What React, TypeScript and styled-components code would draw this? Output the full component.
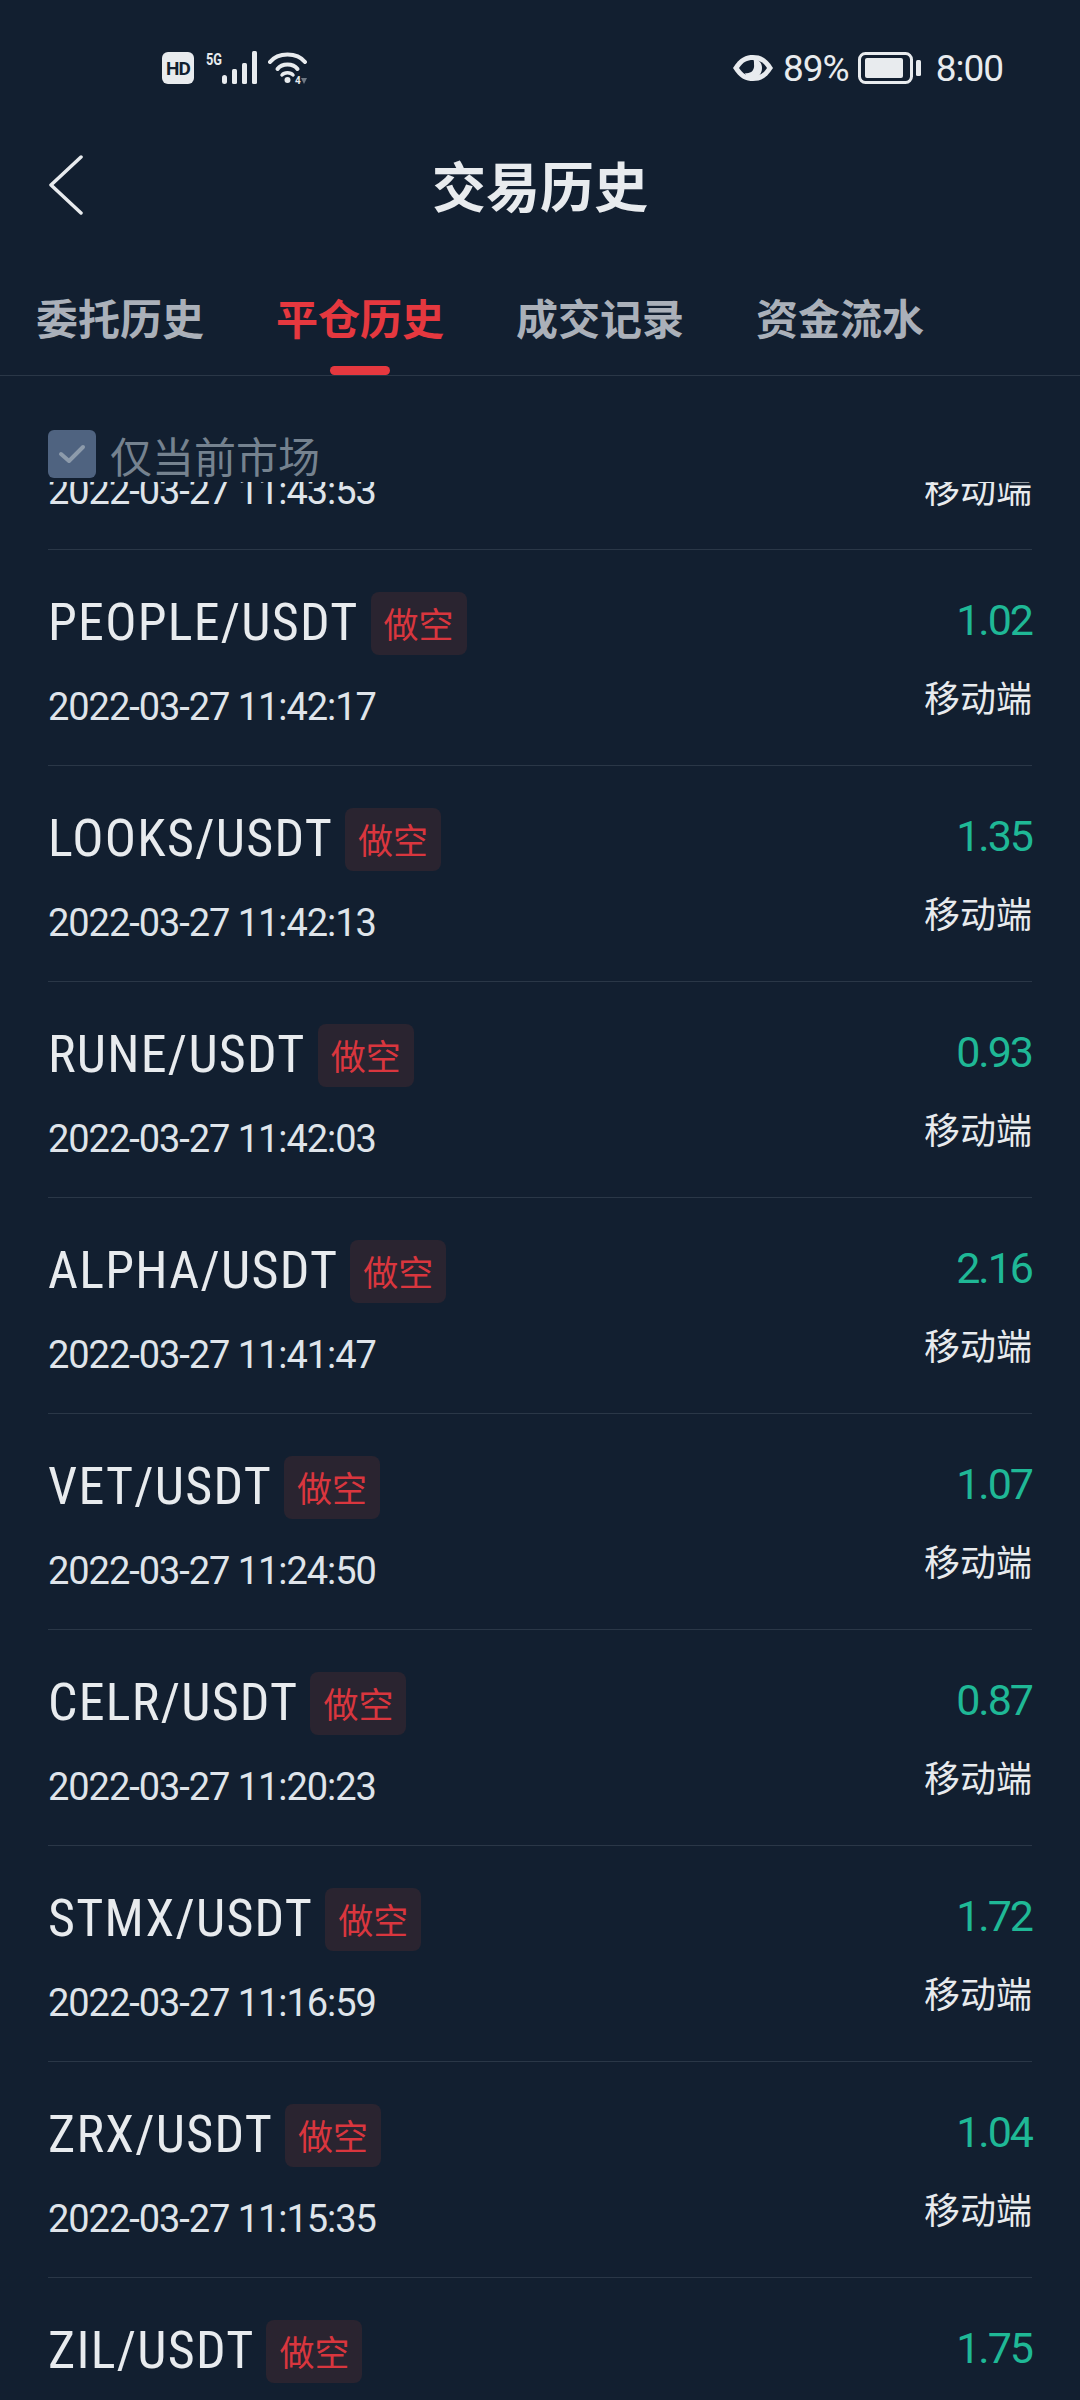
import React from 'react';
import styled, { createGlobalStyle } from 'styled-components';

const GlobalStyle = createGlobalStyle`
  html, body {
    margin: 0;
    padding: 0;
    background: #121f30;
  }
`

const fontStack = `Roboto, "Noto Sans CJK SC", sans-serif`

const trades = [
  { pair: 'PEOPLE/USDT', time: '2022-03-27 11:42:17', profit: '1.02' },
  { pair: 'LOOKS/USDT', time: '2022-03-27 11:42:13', profit: '1.35' },
  { pair: 'RUNE/USDT', time: '2022-03-27 11:42:03', profit: '0.93' },
  { pair: 'ALPHA/USDT', time: '2022-03-27 11:41:47', profit: '2.16' },
  { pair: 'VET/USDT', time: '2022-03-27 11:24:50', profit: '1.07' },
  { pair: 'CELR/USDT', time: '2022-03-27 11:20:23', profit: '0.87' },
  { pair: 'STMX/USDT', time: '2022-03-27 11:16:59', profit: '1.72' },
  { pair: 'ZRX/USDT', time: '2022-03-27 11:15:35', profit: '1.04' },
  { pair: 'ZIL/USDT', time: '2022-03-27 11:13:20', profit: '1.75' },
]

const tabs = ['委托历史', '平仓历史', '成交记录', '资金流水']

const SignalIcon = () => (
  <svg width="52" height="34" viewBox="0 0 52 34">
    <text x="0" y="14" fontSize="17" fontWeight="700" fill="#e8ebee" fontFamily="Roboto, sans-serif" textLength="16" lengthAdjust="spacingAndGlyphs">5G</text>
    <g fill="#e8ebee">
      <rect x="16" y="24" width="5" height="9" rx="2.5" />
      <rect x="26" y="18" width="5" height="15" rx="1.5" />
      <rect x="36" y="12" width="5" height="21" rx="1.5" />
      <rect x="46" y="0" width="5" height="33" rx="1.5" />
    </g>
  </svg>
)

const WifiIcon = () => (
  <svg width="40" height="32" viewBox="0 0 40 32" fill="none">
    <path d="M2 10 C10 0 29 0 37 10" stroke="#e8ebee" strokeWidth="4" strokeLinecap="round" />
    <path d="M9.5 17 C14 11 25 11 29.5 17" stroke="#e8ebee" strokeWidth="4" strokeLinecap="round" />
    <path d="M14 23 C16.5 20 22.5 20 25 23" stroke="#e8ebee" strokeWidth="3.5" strokeLinecap="round" />
    <circle cx="19.5" cy="28" r="3" fill="#e8ebee" />
    <text x="27" y="32" fontSize="10" fontWeight="700" fill="#e8ebee" fontFamily="Roboto, sans-serif">4</text>
    <path d="M33 26 L39 26 L36 32 Z" fill="#6f7883" />
  </svg>
)

const EyeIcon = () => (
  <svg width="42" height="28" viewBox="0 0 42 28">
    <path d="M1 14 C8 3 14 1 21 1 C28 1 34 3 41 14 C34 25 28 27 21 27 C14 27 8 25 1 14 Z" fill="#e8ebee" />
    <path d="M7 14 C11 8 15 6 21 6 C27 6 31 8 35 14 C31 20 27 22 21 22 C15 22 11 20 7 14 Z" fill="#121f30" />
    <path d="M21 5 C27 5 30 9 30 14 C30 20 26 24 21 24 C17 24 14 22 13 19 C18 20 23 17 22 10 C22 8 22 6 21 5 Z" fill="#e8ebee" />
  </svg>
)

const BatteryIcon = () => (
  <svg width="63" height="32" viewBox="0 0 63 32">
    <rect x="1.5" y="1.5" width="52" height="29" rx="6" fill="none" stroke="#e8ebee" strokeWidth="3" />
    <rect x="7" y="6" width="38" height="20" rx="2" fill="#e8ebee" />
    <rect x="58" y="8" width="5" height="16" rx="1.5" fill="#e8ebee" />
  </svg>
)

const BackIcon = () => (
  <svg width="36" height="60" viewBox="0 0 36 60" fill="none">
    <path d="M33 2 L3 30 L33 58" stroke="#e8ebee" strokeWidth="3.5" strokeLinecap="round" strokeLinejoin="round" />
  </svg>
)

export default function App() {
  return (
    <>
      <GlobalStyle />
      <Screen>
        <StatusBar>
          <StatusLeft>
            <HdBadge>HD</HdBadge>
            <SignalIcon />
            <WifiIcon />
          </StatusLeft>
          <StatusRight>
            <EyeIcon />
            <StatusText>89%</StatusText>
            <BatteryIcon />
            <ClockText>8:00</ClockText>
          </StatusRight>
        </StatusBar>
        <Header>
          <BackSlot><BackIcon /></BackSlot>
          <Title>交易历史</Title>
        </Header>
        <TabBar>
          {tabs.map((tab, index) => (
            <Tab key={tab} active={index === 1}>{tab}</Tab>
          ))}
        </TabBar>
        <FilterRow>
          <CheckBox>
            <svg width="28" height="20" viewBox="0 0 28 20" fill="none">
              <path d="M3 10 L11 17 L25 3" stroke="#8d9bab" strokeWidth="4" strokeLinecap="round" strokeLinejoin="round" />
            </svg>
          </CheckBox>
          <FilterLabel>仅当前市场</FilterLabel>
        </FilterRow>
        <ClippedRow>
          <TradeTime>2022-03-27 11:43:53</TradeTime>
          <Source>移动端</Source>
        </ClippedRow>
        <List>
          {trades.map(trade => (
            <Row key={trade.pair}>
              <TopLine>
                <PairWrap>
                  <Pair>{trade.pair}</Pair>
                  <SideTag>做空</SideTag>
                </PairWrap>
                <Profit>{trade.profit}</Profit>
              </TopLine>
              <BottomLine>
                <TradeTime>{trade.time}</TradeTime>
                <Source>移动端</Source>
              </BottomLine>
            </Row>
          ))}
        </List>
      </Screen>
    </>
  )
}

const Screen = styled.div`
  width: 1080px;
  height: 2400px;
  overflow: hidden;
  background: #121f30;
  color: #e8ebee;
  font-family: ${fontStack};
`

const StatusBar = styled.div`
  height: 136px;
  padding: 0 77px 0 162px;
  display: flex;
  align-items: center;
  justify-content: space-between;
  box-sizing: border-box;
`

const StatusLeft = styled.div`
  display: flex;
  align-items: center;
  gap: 10px;
`

const HdBadge = styled.div`
  width: 32px;
  height: 32px;
  margin-right: 2px;
  border-radius: 6px;
  background: #e8ebee;
  color: #121f30;
  font-size: 19px;
  font-weight: 700;
  letter-spacing: -1px;
  display: flex;
  align-items: center;
  justify-content: center;
`

const StatusRight = styled.div`
  display: flex;
  align-items: center;
  gap: 9px;
`

const StatusText = styled.span`
  font-size: 37px;
  letter-spacing: -1px;
`

const ClockText = styled(StatusText)`
  margin-left: 6px;
`

const Header = styled.div`
  height: 102px;
  padding-left: 48px;
  display: flex;
  align-items: center;
  position: relative;
`

const BackSlot = styled.div`
  display: flex;
  margin-bottom: 5px;
`

const Title = styled.h1`
  position: absolute;
  left: 0;
  right: 0;
  margin: 0;
  padding-bottom: 6px;
  text-align: center;
  font-size: 54px;
  font-weight: 700;
`

const TabBar = styled.div`
  height: 138px;
  padding: 0 36px;
  display: flex;
  gap: 72px;
  align-items: center;
  box-sizing: border-box;
  border-bottom: 1px solid #2a3747;
`

const Tab = styled.div<{ active?: boolean }>`
  position: relative;
  height: 100%;
  padding-top: 20px;
  box-sizing: border-box;
  display: flex;
  align-items: center;
  font-size: 42px;
  font-weight: 700;
  color: ${props => props.active ? '#e5383f' : '#aab0b9'};

  &::after {
    content: '';
    display: ${props => props.active ? 'block' : 'none'};
    position: absolute;
    left: 50%;
    bottom: 0;
    width: 60px;
    height: 9px;
    margin-left: -30px;
    border-radius: 5px;
    background: #e5383f;
  }
`

const FilterRow = styled.div`
  height: 106px;
  padding: 54px 48px 0;
  box-sizing: border-box;
  display: flex;
  align-items: flex-start;
  gap: 14px;
`

const CheckBox = styled.div`
  width: 48px;
  height: 48px;
  border-radius: 6px;
  background: #4f6380;
  display: flex;
  align-items: center;
  justify-content: center;
`

const FilterLabel = styled.span`
  margin-top: 3px;
  font-size: 42px;
  line-height: 52px;
  color: #75828f;
`

const ClippedRow = styled.div`
  height: 68px;
  margin: 0 48px;
  padding-bottom: 35px;
  box-sizing: border-box;
  overflow: hidden;
  border-bottom: 1px solid #2a3747;
  display: flex;
  align-items: flex-end;
  justify-content: space-between;
`

const List = styled.div`
  padding: 0 48px;
`

const Row = styled.div`
  height: 216px;
  padding-top: 40px;
  box-sizing: border-box;
  border-bottom: 1px solid #2a3747;
  display: flex;
  flex-direction: column;
  gap: 30px;
`

const TopLine = styled.div`
  height: 64px;
  display: flex;
  align-items: center;
  justify-content: space-between;
`

const BottomLine = styled.div`
  display: flex;
  align-items: flex-start;
  justify-content: space-between;
`

const PairWrap = styled.div`
  display: flex;
  align-items: flex-start;
  gap: 12px;
`

const Pair = styled.span`
  margin-top: 2px;
  font-size: 52px;
  font-stretch: 85%;
  letter-spacing: 1.25px;
  line-height: 64px;
  color: #e8ebee;
`

const SideTag = styled.span`
  margin-top: 3px;
  padding: 6px 13px 0;
  height: 57px;
  line-height: 57px;
  font-size: 35px;
  color: #d9363e;
  background: #2a2430;
  border-radius: 8px;
`

const Profit = styled.span`
  margin-bottom: 4px;
  font-size: 43px;
  letter-spacing: -2px;
  color: #1fb896;
`

const TradeTime = styled.span`
  font-size: 38px;
  letter-spacing: -1.05px;
  line-height: 46px;
  color: #dfe4ea;
`

const Source = styled.span`
  margin-top: -7px;
  font-size: 36px;
  line-height: 46px;
  color: #e8ebee;
`
